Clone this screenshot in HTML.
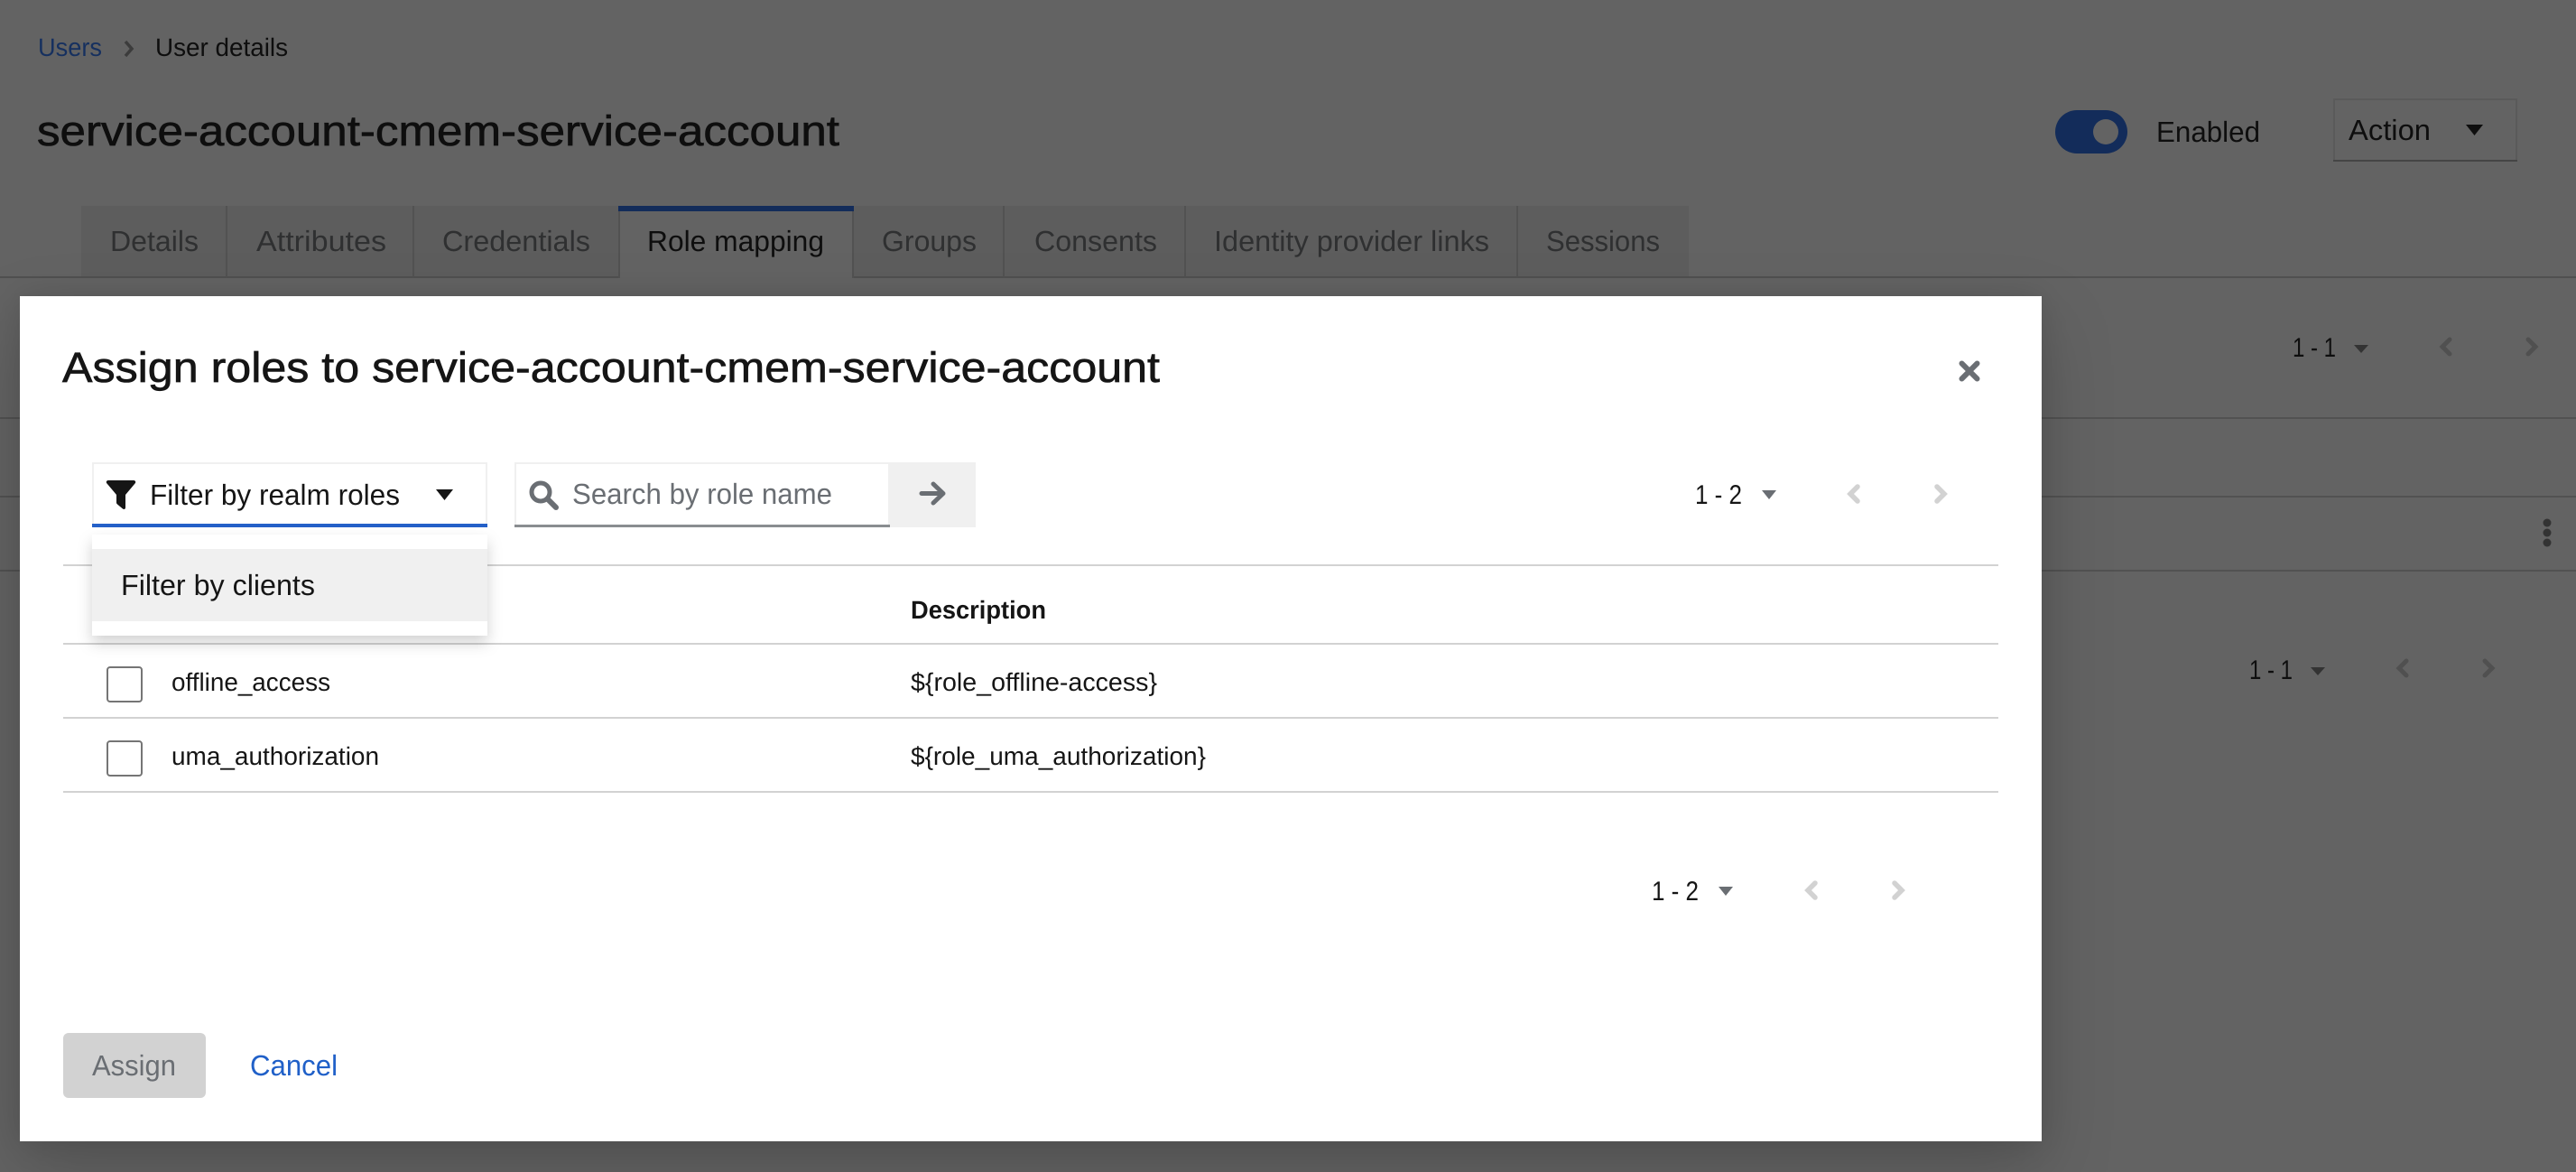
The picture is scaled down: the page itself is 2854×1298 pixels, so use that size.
<!DOCTYPE html>
<html lang="en">
<head>
<meta charset="utf-8">
<title>Assign roles</title>
<style>
html,body{margin:0;padding:0;width:2854px;height:1298px;overflow:hidden;background:#636363}
svg{display:block;position:absolute;left:0;top:0}
text{font-family:"Liberation Sans",sans-serif;text-rendering:geometricPrecision;white-space:pre}
.f32{font-size:32px}
.f28{font-size:28px}
.f30{font-size:30px}
.dim{fill:#0e0e0e}
.tab{fill:#2f3031;font-size:32px}
.ink{fill:#151515}
</style>
</head>
<body>
<svg width="2854" height="1298" viewBox="0 0 2854 1298" xmlns="http://www.w3.org/2000/svg">
  <rect width="2854" height="1298" fill="#636363"/>

  <!-- breadcrumb -->
  <text x="42" y="62" class="f28" fill="#16305f" textLength="71" lengthAdjust="spacingAndGlyphs">Users</text>
  <path d="M139 46l7 8-7 8" fill="none" stroke="#3c3c3c" stroke-width="3.5"/>
  <text x="172" y="62" class="f28 dim" textLength="147" lengthAdjust="spacingAndGlyphs">User details</text>

  <!-- title -->
  <text x="41" y="161" font-size="47" class="dim" stroke="#0e0e0e" stroke-width=".7" textLength="889" lengthAdjust="spacingAndGlyphs">service-account-cmem-service-account</text>

  <!-- toggle -->
  <rect x="2277" y="122" width="80" height="48" rx="24" fill="#132c5a"/>
  <circle cx="2333" cy="146" r="14" fill="#636363"/>
  <text x="2389" y="157" class="f32 dim" textLength="115" lengthAdjust="spacingAndGlyphs">Enabled</text>

  <!-- action -->
  <rect x="2586" y="110" width="202" height="68" fill="none" stroke="#5a5a5a" stroke-width="2"/>
  <rect x="2585" y="177" width="204" height="2" fill="#454545"/>
  <text x="2602" y="155" class="f32 dim" textLength="91" lengthAdjust="spacingAndGlyphs">Action</text>
  <path d="M2732 138h19l-9.500 12z" fill="#0e0e0e"/>

  <!-- tabs -->
  <rect x="90" y="228" width="596" height="78" fill="#5d5d5d"/>
  <rect x="945" y="228" width="926" height="78" fill="#5d5d5d"/>
  <rect x="0" y="306" width="2854" height="2" fill="#505050"/>
  <rect x="687" y="306" width="257" height="2" fill="#636363"/>
  <g fill="#525252">
    <rect x="250" y="228" width="2" height="78"/>
    <rect x="457" y="228" width="2" height="78"/>
    <rect x="685" y="234" width="2" height="74"/>
    <rect x="944" y="234" width="2" height="74"/>
    <rect x="1111" y="228" width="2" height="78"/>
    <rect x="1312" y="228" width="2" height="78"/>
    <rect x="1680" y="228" width="2" height="78"/>
  </g>
  <rect x="685" y="228" width="261" height="6" fill="#132c5a"/>
  <text x="122" y="278" class="tab" textLength="98" lengthAdjust="spacingAndGlyphs">Details</text>
  <text x="284" y="278" class="tab" textLength="144" lengthAdjust="spacingAndGlyphs">Attributes</text>
  <text x="490" y="278" class="tab" textLength="164" lengthAdjust="spacingAndGlyphs">Credentials</text>
  <text x="717" y="278" class="f32 dim" textLength="196" lengthAdjust="spacingAndGlyphs">Role mapping</text>
  <text x="977" y="278" class="tab" textLength="105" lengthAdjust="spacingAndGlyphs">Groups</text>
  <text x="1146" y="278" class="tab" textLength="136" lengthAdjust="spacingAndGlyphs">Consents</text>
  <text x="1345" y="278" class="tab" textLength="305" lengthAdjust="spacingAndGlyphs">Identity provider links</text>
  <text x="1713" y="278" class="tab" textLength="126" lengthAdjust="spacingAndGlyphs">Sessions</text>

  <!-- background table lines -->
  <g fill="#525252">
    <rect x="0" y="462" width="2854" height="2"/>
    <rect x="0" y="549" width="2854" height="2"/>
    <rect x="0" y="631" width="2854" height="2"/>
  </g>
  <circle cx="2822" cy="579" r="4.500" fill="#333"/>
  <circle cx="2822" cy="590" r="4.500" fill="#333"/>
  <circle cx="2822" cy="601" r="4.500" fill="#333"/>

  <!-- background pager 1 -->
  <text x="2540" y="395" class="f30 dim" textLength="48" lengthAdjust="spacingAndGlyphs">1 - 1</text>
  <path d="M2608 382h16l-8 9z" fill="#333"/>
  <path d="M2714 376l-8 8 8 8" fill="none" stroke="#505050" stroke-width="5" stroke-linecap="round"/>
  <path d="M2801 376l8 8-8 8" fill="none" stroke="#505050" stroke-width="5" stroke-linecap="round"/>

  <!-- background pager 2 -->
  <text x="2492" y="752" class="f30 dim" textLength="48" lengthAdjust="spacingAndGlyphs">1 - 1</text>
  <path d="M2560 739h16l-8 9z" fill="#333"/>
  <path d="M2666 732l-8 8 8 8" fill="none" stroke="#505050" stroke-width="5" stroke-linecap="round"/>
  <path d="M2753 732l8 8-8 8" fill="none" stroke="#505050" stroke-width="5" stroke-linecap="round"/>

  <!-- modal -->
  <rect x="22" y="328" width="2240" height="936" fill="#fff" style="filter:drop-shadow(0 32px 40px rgba(3,3,3,.16)) drop-shadow(0 0 16px rgba(3,3,3,.1))"/>

  <text x="69" y="423" font-size="47" class="ink" stroke="#151515" stroke-width=".7" textLength="1216" lengthAdjust="spacingAndGlyphs">Assign roles to service-account-cmem-service-account</text>
  <path d="M2173.500 402.500l17 17M2190.500 402.500l-17 17" fill="none" stroke="#6a6e73" stroke-width="6" stroke-linecap="round"/>

  <!-- table lines -->
  <g fill="#d2d2d2">
    <rect x="70" y="625" width="2144" height="2"/>
    <rect x="70" y="712" width="2144" height="2"/>
    <rect x="70" y="794" width="2144" height="2"/>
    <rect x="70" y="876" width="2144" height="2"/>
  </g>

  <!-- filter select -->
  <rect x="103" y="513" width="436" height="70" fill="#fff" stroke="#f0f0f0" stroke-width="2"/>
  <rect x="102" y="580" width="438" height="4" fill="#2460c8"/>
  <path d="M120 532h28c2 0 3 2 1.500 3.500L139 548v14c0 2-1.500 2.500-3 1.500l-6-5c-1-.8-1-1.500-1-2.500v-8L118.500 535.500C117 534 118 532 120 532z" fill="#151515"/>
  <text x="166" y="559" class="f32 ink" textLength="277" lengthAdjust="spacingAndGlyphs">Filter by realm roles</text>
  <path d="M483 542h19l-9.500 12z" fill="#151515"/>

  <!-- search -->
  <rect x="571" y="513" width="414" height="70" fill="#fff" stroke="#f0f0f0" stroke-width="2"/>
  <rect x="570" y="581" width="416" height="3" fill="#8a8d90"/>
  <circle cx="599" cy="545" r="10" fill="none" stroke="#6a6e73" stroke-width="5"/>
  <path d="M607 553l9 9" stroke="#6a6e73" stroke-width="6" stroke-linecap="round"/>
  <text x="634" y="558" class="f32" fill="#6a6e73" textLength="288" lengthAdjust="spacingAndGlyphs">Search by role name</text>
  <rect x="986" y="512" width="95" height="72" fill="#f0f0f0"/>
  <path d="M1021 546.500h23M1034 536l11 10.500-11 10.500" fill="none" stroke="#6a6e73" stroke-width="5" stroke-linecap="round" stroke-linejoin="round"/>

  <!-- modal top pager -->
  <text x="1878" y="558" class="f30 ink" textLength="52" lengthAdjust="spacingAndGlyphs">1 - 2</text>
  <path d="M1952 543h16l-8 10z" fill="#6a6e73"/>
  <path d="M2058 539l-8 8 8 8" fill="none" stroke="#d2d2d2" stroke-width="5.500" stroke-linecap="round"/>
  <path d="M2146 539l8 8-8 8" fill="none" stroke="#d2d2d2" stroke-width="5.500" stroke-linecap="round"/>

  <!-- table content -->
  <text x="1009" y="685" class="f28 ink" font-weight="700" textLength="150" lengthAdjust="spacingAndGlyphs">Description</text>
  <rect x="119" y="739" width="38" height="38" rx="3" fill="#fff" stroke="#757575" stroke-width="2"/>
  <text x="190" y="765" class="f28 ink" textLength="176" lengthAdjust="spacingAndGlyphs">offline_access</text>
  <text x="1009" y="765" class="f28 ink" textLength="273" lengthAdjust="spacingAndGlyphs">${role_offline-access}</text>
  <rect x="119" y="821" width="38" height="38" rx="3" fill="#fff" stroke="#757575" stroke-width="2"/>
  <text x="190" y="847" class="f28 ink" textLength="230" lengthAdjust="spacingAndGlyphs">uma_authorization</text>
  <text x="1009" y="847" class="f28 ink" textLength="327" lengthAdjust="spacingAndGlyphs">${role_uma_authorization}</text>

  <!-- dropdown -->
  <rect x="102" y="592" width="438" height="112" fill="#fff" style="filter:drop-shadow(0 8px 8px rgba(3,3,3,.18))"/>
  <rect x="102" y="608" width="438" height="80" fill="#f0f0f0"/>
  <text x="134" y="659" class="f32 ink" textLength="215" lengthAdjust="spacingAndGlyphs">Filter by clients</text>

  <!-- modal bottom pager -->
  <text x="1830" y="997" class="f30 ink" textLength="52" lengthAdjust="spacingAndGlyphs">1 - 2</text>
  <path d="M1904 982h16l-8 10z" fill="#6a6e73"/>
  <path d="M2011 978l-8 8 8 8" fill="none" stroke="#d2d2d2" stroke-width="5.500" stroke-linecap="round"/>
  <path d="M2099 978l8 8-8 8" fill="none" stroke="#d2d2d2" stroke-width="5.500" stroke-linecap="round"/>

  <!-- buttons -->
  <rect x="70" y="1144" width="158" height="72" rx="6" fill="#d2d2d2"/>
  <text x="102" y="1191" class="f32" fill="#6a6e73" textLength="93" lengthAdjust="spacingAndGlyphs">Assign</text>
  <text x="277" y="1191" class="f32" fill="#2060c8" textLength="97" lengthAdjust="spacingAndGlyphs">Cancel</text>
</svg>
</body>
</html>
